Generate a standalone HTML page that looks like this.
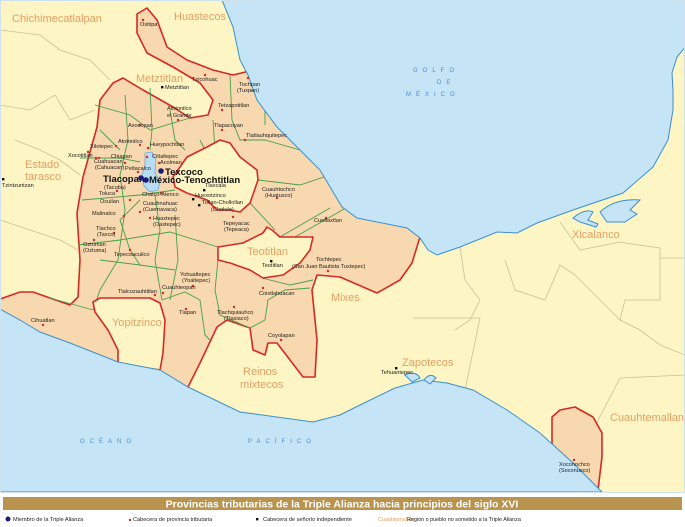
<!DOCTYPE html>
<html><head><meta charset="utf-8"><style>
html,body{margin:0;padding:0;background:#fff}
svg{display:block}
text{font-family:"Liberation Sans",sans-serif}
.s{font-size:5.6px;fill:#222}
.b{font-size:11px;fill:#e6a062}
.o{font-size:6px;fill:#4a8cc8;letter-spacing:5px}
.k{font-size:9.5px;font-weight:bold;fill:#111}
</style></head><body>
<svg width="685" height="527" viewBox="0 0 685 527" xmlns="http://www.w3.org/2000/svg">
<rect x="0" y="0" width="685" height="493" fill="#fdf5c4"/>
<g fill="none" stroke="#cdbf9c" stroke-width="0.8">
<path d="M0,30 L40,35 L60,50 L90,60 L110,80"/>
<path d="M0,105 L30,110 L55,95 L70,120 L95,110"/>
<path d="M15,140 L40,150 L60,160 L80,175"/>
<path d="M0,220 L30,230 L60,240 L78,250"/>
<path d="M460,247 L465,280 L480,300 L470,320 L455,330"/>
<path d="M505,260 L515,290 L545,300 L560,265 L575,275 L590,290 L600,300 L620,320 L640,330 L660,345 L685,355"/>
<path d="M413,318 L480,318 L465,390"/>
<path d="M618,242 L660,248 L660,300 L625,300 L620,320"/>
<path d="M660,258 L685,258"/>
<path d="M620,378 L685,375"/>
<path d="M620,378 L592,432"/>
<path d="M560,222 L580,250 L620,242"/>
</g>
<path fill="#f8d8ae" stroke="#d42a26" stroke-width="1.6" stroke-linejoin="round" d="M137,14 L147,8 L157,20 L167,47 L187,60 L213,70 L233,75 L262,68 L300,115 L360,195 L430,215 L420,237 L412,263 L400,280 L377,293 L340,277 L317,275 L312,290 L317,340 L315,377 L303,377 L290,360 L277,343 L268,343 L265,355 L253,350 L250,328 L227,320 L217,327 L200,363 L188,387 L180,410 L-10,330 L-10,302 L3,298 L20,292 L33,292 L50,298 L70,305 L78,297 L80,260 L78,230 L77,213 L83,177 L97,127 L100,100 L113,83 L123,78 L143,90 L173,107 L190,118 L208,115 L213,100 L200,83 L173,67 L147,53 L137,33 Z"/>
<g fill="none" stroke="#45a04a" stroke-width="0.9">
<path d="M80,158 L120,158 L140,162"/><path d="M82,200 L140,195 L175,190"/>
<path d="M78,245 L120,240 L170,232 L218,247"/><path d="M95,105 L130,115 L150,130 L190,118"/>
<path d="M150,88 L152,130 L150,150"/><path d="M125,95 L128,140 L120,175 L125,210 L118,260 L100,290 L93,310"/>
<path d="M170,110 L175,140 L185,150"/><path d="M213,120 L215,150 L230,143"/>
<path d="M230,75 L232,120 L240,140 L265,140 L300,150"/><path d="M250,90 L265,95 L265,125"/>
<path d="M258,180 L300,185 L330,175"/><path d="M250,203 L275,230"/><path d="M280,237 L330,208"/><path d="M295,237 L360,200"/>
<path d="M155,195 L160,230 L155,260 L162,300"/><path d="M175,215 L178,260 L170,300"/>
<path d="M162,300 L185,292 L200,300 L205,335 L210,340"/>
<path d="M218,260 L215,290 L220,315 L250,328 L265,320 L268,300 L285,290 L310,288"/>
<path d="M262,278 L290,285 L313,280"/><path d="M140,200 L120,220 L130,250 L140,265"/>
<path d="M100,260 L140,265 L175,270"/><path d="M50,298 L93,310"/>
<path d="M200,140 L210,160"/><path d="M100,130 L120,150"/>
</g>
<g fill="#fdf5c4" stroke="#d42a26" stroke-width="1.6" stroke-linejoin="round">
<path d="M173,177 L187,157 L207,147 L220,140 L230,143 L240,157 L257,170 L258,180 L250,203 L240,212 L230,210 L217,210 L207,200 L187,193 L175,187 Z"/>
<path d="M218,247 L243,243 L263,233 L267,227 L272,230 L280,237 L313,237 L310,250 L300,263 L283,275 L263,278 L250,270 L230,263 L218,260 Z"/>
<path d="M95,312 L93,302 L100,298 L150,298 L160,303 L165,320 L163,353 L160,370 L118,364 L118,350 L108,330 Z"/>
<path fill="#f8d8ae" d="M552,445 L552,417 L560,410 L575,407 L593,417 L602,433 L602,457 L598,490 L560,460 Z"/>
</g>
<path d="M145,153 L152,152 L156,160 L155,172 L160,182 L158,190 L150,192 L144,186 L142,175 L145,165 Z" fill="#b7dcf3" stroke="#4d9ad4" stroke-width="0.6"/>
<g fill="#c5e5f7" stroke="#3a8fd0" stroke-width="1">
<path d="M222,-2 L222,0 L233,27 L240,60 L248,75 L257,100 L277,127 L300,150 L320,170 L342,207 L357,218 L407,228 L420,238 L428,250 L437,255 L460,247 L497,232 L517,233 L537,223 L573,210 L623,193 L653,167 L668,140 L673,110 L673,90 L672,73 L677,57 L687,45 L687,-2 Z"/>
<path d="M-2,308 L20,320 L40,332 L70,343 L118,362 L160,370 L188,387 L240,412 L313,422 L340,415 L360,405 L395,388 L423,380 L447,383 L473,390 L507,410 L540,433 L573,463 L602,492 L-2,492 Z"/>
<path d="M573,218 Q585,208 593,212 L588,220 L598,224 L596,227 L580,222 Z"/>
<path d="M600,212 Q615,198 640,200 L630,210 L637,214 L625,222 L607,222 Z"/>
<path d="M405,375 Q415,370 420,378 L412,382 Z"/><path d="M424,380 Q430,372 436,378 L430,384 Z"/>
</g>
<rect x="0.5" y="0.5" width="684" height="492" fill="none" stroke="#cfe3ef" stroke-width="1"/>
<text class="b" x="12" y="22">Chichimecatlalpan</text>
<text class="b" x="174" y="20">Huastecos</text>
<text class="b" x="136" y="82">Metztitlan</text>
<text class="b" x="25" y="168">Estado</text>
<text class="b" x="25" y="180">tarasco</text>
<text class="b" x="247" y="255">Teotitlan</text>
<text class="b" x="331" y="301">Mixes</text>
<text class="b" x="112" y="326">Yopitzinco</text>
<text class="b" x="243" y="375">Reinos</text>
<text class="b" x="240" y="388">mixtecos</text>
<text class="b" x="402" y="366">Zapotecos</text>
<text class="b" x="572" y="238">Xicalanco</text>
<text class="b" x="610" y="421">Cuauhtemallan</text>
<text class="o" x="413" y="72">GOLFO</text>
<text class="o" x="437" y="84">DE</text>
<text class="o" x="406" y="96">MÉXICO</text>
<text class="o" x="80" y="443">OCÉANO</text>
<text class="o" x="248" y="443">PACÍFICO</text>
<text class="k" x="165" y="175">Texcoco</text>
<text class="k" x="103" y="182">Tlacopan</text>
<text class="k" x="149" y="183">México-Tenochtitlan</text>
<circle cx="161" cy="171" r="2.8" fill="#1c1c7a"/><circle cx="141" cy="178" r="2.8" fill="#1c1c7a"/><circle cx="146" cy="180" r="2.8" fill="#1c1c7a"/>
<g fill="#d42a26">
<circle cx="143" cy="20" r="1.2"/><circle cx="205" cy="75" r="1.2"/><circle cx="248" cy="78" r="1.2"/><circle cx="178" cy="120" r="1.2"/><circle cx="222" cy="110" r="1.2"/><circle cx="222" cy="130" r="1.2"/><circle cx="245" cy="140" r="1.2"/><circle cx="140" cy="125" r="1.2"/><circle cx="140" cy="145" r="1.2"/><circle cx="116" cy="146" r="1.2"/><circle cx="148" cy="148" r="1.2"/><circle cx="96" cy="158" r="1.2"/><circle cx="147" cy="157" r="1.2"/><circle cx="159" cy="163" r="1.2"/><circle cx="125" cy="163" r="1.2"/><circle cx="138" cy="172" r="1.2"/><circle cx="117" cy="191" r="1.2"/><circle cx="161" cy="193" r="1.2"/><circle cx="130" cy="200" r="1.2"/><circle cx="140" cy="212" r="1.2"/><circle cx="124" cy="216" r="1.2"/><circle cx="150" cy="218" r="1.2"/><circle cx="277" cy="198" r="1.2"/><circle cx="326" cy="218" r="1.2"/><circle cx="233" cy="217" r="1.2"/><circle cx="114" cy="233" r="1.2"/><circle cx="94" cy="240" r="1.2"/><circle cx="130" cy="250" r="1.2"/><circle cx="328" cy="271" r="1.2"/><circle cx="193" cy="286" r="1.2"/><circle cx="155" cy="295" r="1.2"/><circle cx="163" cy="293" r="1.2"/><circle cx="263" cy="288" r="1.2"/><circle cx="186" cy="309" r="1.2"/><circle cx="234" cy="307" r="1.2"/><circle cx="43" cy="325" r="1.2"/><circle cx="281" cy="340" r="1.2"/><circle cx="574" cy="460" r="1.2"/><circle cx="99" cy="158" r="1.2"/><circle cx="88" cy="152" r="1.2"/>
</g>
<g fill="#111">
<rect x="161" y="86" width="2.4" height="2.4"/><rect x="203" y="189" width="2.4" height="2.4"/><rect x="192" y="198" width="2.4" height="2.4"/><rect x="198" y="204" width="2.4" height="2.4"/><rect x="270" y="260" width="2.4" height="2.4"/><rect x="395" y="367" width="2.4" height="2.4"/><rect x="2" y="178" width="2.4" height="2.4"/>
</g>
<g class="s">
<text x="140" y="26">Oxitipa</text><text x="192" y="81">Tzicohuac</text><text x="239" y="86">Tochpan</text><text x="237" y="92">(Tuxpan)</text>
<text x="165" y="89">Metztitlan</text><text x="167" y="110">Atotonilco</text><text x="167" y="117">el Grande</text><text x="218" y="107">Tetzapotitlan</text>
<text x="128" y="127">Axocopan</text><text x="214" y="127">Tlapacoyan</text><text x="246" y="137">Tlatlauhquitepec</text>
<text x="118" y="143">Atotonilco</text><text x="150" y="146">Hueypochtlan</text><text x="90" y="148">Xilotepec</text><text x="68" y="157">Xocotitlan</text>
<text x="111" y="158">Chiapan</text><text x="152" y="158">Citlaltepec</text><text x="94" y="163">Cuahuacan</text><text x="95" y="169">(Cahuacan)</text><text x="160" y="164">Acolman</text><text x="125" y="170">Petlacalco</text>
<text x="104" y="189">(Tacuba)</text><text x="99" y="195">Toluca</text><text x="142" y="196">Chalco-Atenco</text><text x="205" y="187">Tlaxcala</text><text x="195" y="197">Huexotzinco</text><text x="202" y="204">Tollan-Chollollan</text><text x="211" y="211">(Cholula)</text>
<text x="100" y="203">Ocuilan</text><text x="143" y="205">Cuauhnahuac</text><text x="143" y="211">(Cuernavaca)</text><text x="92" y="215">Malinalco</text><text x="153" y="220">Huaxtepec</text><text x="153" y="226">(Oaxtepec)</text>
<text x="262" y="191">Cuauhtochco</text><text x="265" y="197">(Huatusco)</text><text x="314" y="222">Cuetlaxtlan</text><text x="223" y="225">Tepeyacac</text><text x="224" y="231">(Tepeaca)</text>
<text x="96" y="230">Tlachco</text><text x="97" y="236">(Taxco)</text><text x="83" y="246">Oztoman</text><text x="83" y="252">(Oztuma)</text><text x="114" y="256">Tepecoacuilco</text>
<text x="262" y="267">Teotitlan</text><text x="316" y="261">Tochtepec</text><text x="292" y="268">(San Juan Bautista Tuxtepec)</text>
<text x="180" y="276">Yohualtepec</text><text x="182" y="282">(Yoaltepec)</text><text x="118" y="293">Tlalcozauhtitlan</text><text x="162" y="289">Cuauhteopan</text><text x="259" y="295">Coixtlahuacan</text>
<text x="179" y="314">Tlapan</text><text x="217" y="314">Tlachquiauhco</text><text x="224" y="320">(Tlaxiaco)</text><text x="31" y="322">Cihuatlan</text><text x="268" y="337">Coyolapan</text>
<text x="381" y="374">Tehuantepec</text><text x="559" y="466">Xoconochco</text><text x="559" y="472">(Soconusco)</text><text x="2" y="187">Tzintzuntzan</text>
</g>
<rect x="0" y="493" width="685" height="34" fill="#fff"/>
<rect x="3" y="497" width="679" height="13" fill="#b8944f"/>
<text x="342" y="507.5" text-anchor="middle" style="font-size:10.5px;font-weight:bold;fill:#fff">Provincias tributarias de la Triple Alianza hacia principios del siglo XVI</text>
<circle cx="8" cy="519" r="2.5" fill="#1c1c7a"/>
<text x="13" y="521" style="font-size:5.6px;fill:#222">Miembro de la Triple Alianza</text>
<circle cx="130" cy="520" r="1.2" fill="#d42a26"/>
<text x="133" y="521" style="font-size:5.6px;fill:#222">Cabecera de provincia tributaria</text>
<rect x="256" y="518" width="2.4" height="2.4" fill="#111"/>
<text x="263" y="521" style="font-size:5.6px;fill:#222">Cabecera de señorío independiente</text>
<text x="378" y="521" style="font-size:5.4px;fill:#e6a062">Cuauhtemallan</text>
<text x="407" y="521" style="font-size:5.4px;fill:#222">Región o pueblo no sometido a la Triple Alianza</text>
</svg>
</body></html>
